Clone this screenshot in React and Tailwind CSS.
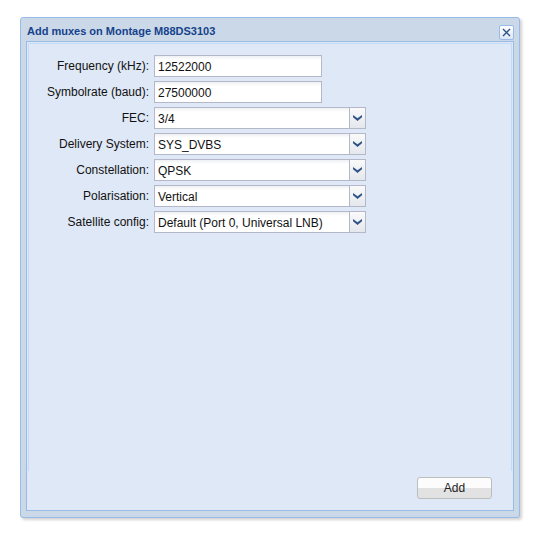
import React from 'react';

const font = { fontFamily: '"Liberation Sans", Arial, sans-serif' };

const TextField = ({ value }) => (
  <div className="w-[168px] h-[22px] border border-[#b5b8c8] bg-white bg-gradient-to-b from-[#eef0f3] to-white to-[4px] flex items-center pl-[3px] pt-[1px] text-[12px] text-[#111]">
    {value}
  </div>
);

const Chevron = () => (
  <svg width="9" height="6" viewBox="0 0 9 6">
    <path d="M0 0 L4.5 3.2 L9 0 L9 2.3 L4.5 6 L0 2.3 Z" fill="#2f5289" />
  </svg>
);

const ComboField = ({ value }) => (
  <div className="w-[212px] h-[22px] flex">
    <div className="flex-1 border border-r-0 border-[#b5b8c8] bg-white bg-gradient-to-b from-[#eef0f3] to-white to-[4px] flex items-center pl-[3px] pt-[1px] text-[12px] text-[#111]">
      {value}
    </div>
    <div className="w-[17px] h-full border border-[#b5b8c8] bg-gradient-to-b from-[#fafafa] to-[#e4e7ec] flex items-center justify-center">
      <Chevron />
    </div>
  </div>
);

const fields = [
  { label: 'Frequency (kHz):', value: '12522000', type: 'text' },
  { label: 'Symbolrate (baud):', value: '27500000', type: 'text' },
  { label: 'FEC:', value: '3/4', type: 'combo' },
  { label: 'Delivery System:', value: 'SYS_DVBS', type: 'combo' },
  { label: 'Constellation:', value: 'QPSK', type: 'combo' },
  { label: 'Polarisation:', value: 'Vertical', type: 'combo' },
  { label: 'Satellite config:', value: 'Default (Port 0, Universal LNB)', type: 'combo' },
];

export default function App() {
  return (
    <div className="w-[536px] h-[533px] bg-white pt-[17px] pl-[20px]" style={font}>
      <div className="w-[500px] h-[501px] border border-[#99bbe8] rounded-[3px] bg-[#cbd8e8] px-[5px] pb-[6px] flex flex-col shadow-[2px_2px_3px_rgba(0,0,0,0.18)]">
        {/* title bar */}
        <div className="h-[23px] flex items-center justify-between shrink-0">
          <span className="text-[11px] font-bold text-[#15428b] pl-[1px] pt-[3px]">Add muxes on Montage M88DS3103</span>
          <div className="w-[15px] h-[15px] border border-[#99bbe8] rounded-[2px] bg-gradient-to-b from-white to-[#dbe6f5] flex items-center justify-center mt-[5px]">
            <svg width="9" height="9" viewBox="0 0 9 9">
              <path d="M1 1 L8 8 M8 1 L1 8" stroke="#2e4f85" strokeWidth="1.4" />
            </svg>
          </div>
        </div>

        {/* body */}
        <div className="flex-1 border border-[#99bbe8] bg-[#dfe8f6] flex flex-col">
          <div className="h-[428px] mx-[1px] mt-[1px] border-l border-r border-t border-[#c3daf9] pt-[11px] flex flex-col gap-[4px]">
            {fields.map((f) => (
              <div key={f.label} className="flex items-center">
                <div className="w-[120px] text-right text-[12px] text-[#111]">{f.label}</div>
                <div className="pl-[5px]">
                  {f.type === 'text' ? <TextField value={f.value} /> : <ComboField value={f.value} />}
                </div>
              </div>
            ))}
          </div>

          {/* button bar */}
          <div className="flex justify-end pr-[21px] pt-[6px]">
            <button className="w-[75px] h-[22px] border border-[#bdbdbd] rounded-[3px] bg-gradient-to-b from-[#fcfcfc] from-50% to-[#e2e2e2] to-50% text-[12px] text-[#222] leading-none">
              Add
            </button>
          </div>
        </div>
      </div>
    </div>
  );
}
